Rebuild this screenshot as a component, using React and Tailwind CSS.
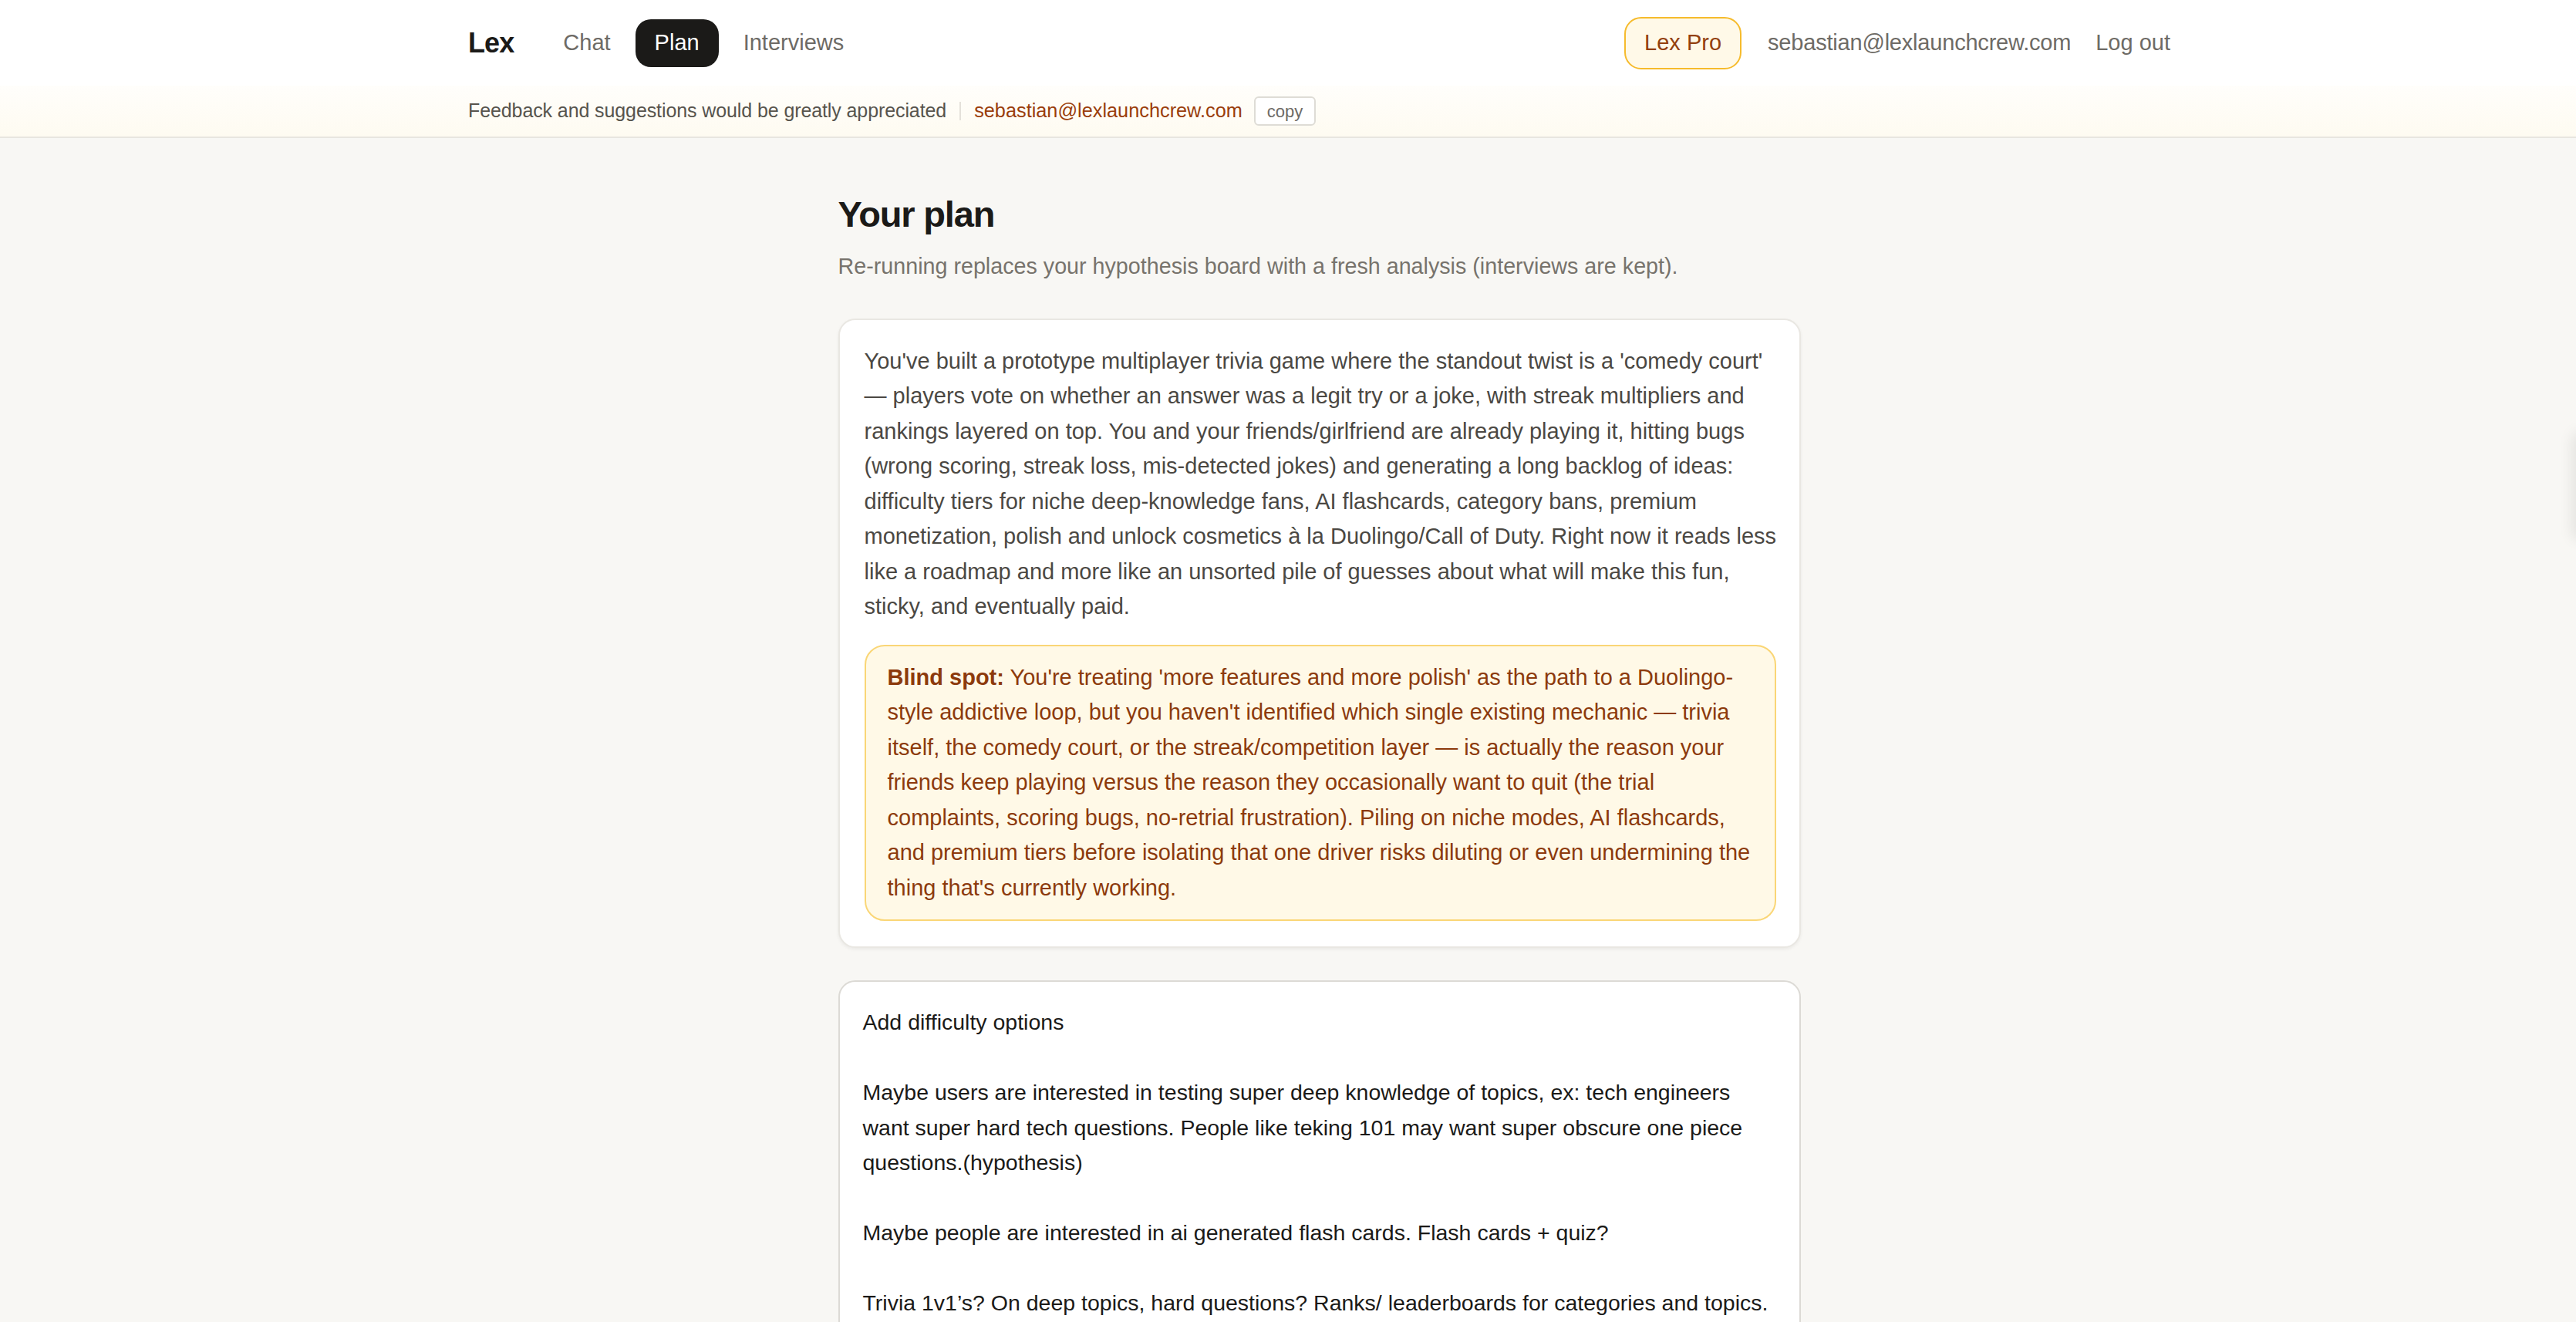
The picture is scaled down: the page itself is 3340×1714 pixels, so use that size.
import React from 'react';

const summary =
  "You've built a prototype multiplayer trivia game where the standout twist is a 'comedy court' — players vote on whether an answer was a legit try or a joke, with streak multipliers and rankings layered on top. You and your friends/girlfriend are already playing it, hitting bugs (wrong scoring, streak loss, mis-detected jokes) and generating a long backlog of ideas: difficulty tiers for niche deep-knowledge fans, AI flashcards, category bans, premium monetization, polish and unlock cosmetics à la Duolingo/Call of Duty. Right now it reads less like a roadmap and more like an unsorted pile of guesses about what will make this fun, sticky, and eventually paid.";

const blindSpot =
  "You're treating 'more features and more polish' as the path to a Duolingo-style addictive loop, but you haven't identified which single existing mechanic — trivia itself, the comedy court, or the streak/competition layer — is actually the reason your friends keep playing versus the reason they occasionally want to quit (the trial complaints, scoring bugs, no-retrial frustration). Piling on niche modes, AI flashcards, and premium tiers before isolating that one driver risks diluting or even undermining the thing that's currently working.";

const notes = [
  'Add difficulty options',
  'Maybe users are interested in testing super deep knowledge of topics, ex: tech engineers want super hard tech questions. People like teking 101 may want super obscure one piece questions.(hypothesis)',
  'Maybe people are interested in ai generated flash cards. Flash cards + quiz?',
  'Trivia 1v1’s? On deep topics, hard questions? Ranks/ leaderboards for categories and topics.',
  'Category bans before a match so players can skip topics they hate.',
];

const NavLink = ({ label, active }) => (
  <a
    href="#"
    className={
      active
        ? 'flex items-center h-[62px] px-[25px] rounded-[20px] bg-[#1b1a18] text-white'
        : 'flex items-center h-[62px] px-[25px] rounded-[20px] text-[#6e6b66]'
    }
  >
    {label}
  </a>
);

const App = () => {
  return (
    <div className="relative min-h-screen bg-[#f8f7f4] font-['Liberation_Sans',Arial,sans-serif] overflow-hidden">
      <header className="bg-white">
        <div className="pl-[81px]">
          <div className="mx-auto w-[2207px] h-[111px] flex items-center justify-between text-[29px]">
            <div className="flex items-center">
              <span className="text-[36px] font-bold tracking-tight text-[#1b1a18]">Lex</span>
              <nav className="ml-[39px] flex items-center gap-[7px]">
                <NavLink label="Chat" />
                <NavLink label="Plan" active />
                <NavLink label="Interviews" />
              </nav>
            </div>
            <div className="flex items-center text-[#6e6b66]">
              <button className="h-[68px] px-[24px] rounded-[22px] border-2 border-[#f6bb2c] bg-[#fff9e8] text-[#92400e]">
                Lex Pro
              </button>
              <span className="ml-[34px] tracking-[-0.2px]">sebastian@lexlaunchcrew.com</span>
              <a href="#" className="ml-[32px]">Log out</a>
            </div>
          </div>
        </div>
      </header>

      <div className="bg-gradient-to-b from-[#fffefb] to-[#fefbf1] border-b-2 border-[#e8e6e0]">
        <div className="pl-[81px]">
          <div className="mx-auto w-[2207px] h-[66px] flex items-center text-[25px]">
            <span className="text-[#57544d] tracking-[-0.1px]">Feedback and suggestions would be greatly appreciated</span>
            <span className="mx-[17px] w-[2px] h-[24px] bg-[#e4e1da]" />
            <span className="text-[25.3px] text-[#9a3d0b]">sebastian@lexlaunchcrew.com</span>
            <button className="ml-[15px] h-[38px] px-[15px] rounded-[6px] border-2 border-[#dedcd6] bg-white text-[22px] text-[#6e6b66]">
              copy
            </button>
          </div>
        </div>
      </div>

      <main className="pl-[81px]">
        <div className="mx-auto w-[1248px] pt-[72px] pb-[80px]">
          <h1 className="text-[47px] leading-[54px] font-bold tracking-tight text-[#1b1a18]">Your plan</h1>
          <p className="mt-[18px] text-[28.7px] leading-[45.5px] text-[#77736c]">
            Re-running replaces your hypothesis board with a fresh analysis (interviews are kept).
          </p>

          <section className="mt-[44px] bg-white border-2 border-[#e9e7e2] rounded-[22px] shadow-[0_2px_4px_rgba(0,0,0,0.06)] pl-[32px] pr-[28px] pt-[31px] pb-[33px]">
            <p className="text-[29px] leading-[45.5px] text-[#4b4843]">{summary}</p>
            <div className="mt-[26px] mr-[2px] bg-[#fff9e7] border-2 border-[#fad676] rounded-[26px] px-[28px] py-[18px] text-[29px] leading-[45.5px] text-[#8c3a0c]">
              <span className="font-bold">Blind spot:</span> {blindSpot}
            </div>
          </section>

          <section className="mt-[42px] bg-white border-2 border-[#dcdad5] rounded-[22px] pl-[30px] pr-[26px] pt-[30px] pb-[30px] text-[28.5px] leading-[45.5px] text-[#1b1a18]">
            {notes.map((n, i) => (
              <p key={i} className={i > 0 ? 'mt-[45.5px]' : ''}>
                {n}
              </p>
            ))}
          </section>
        </div>
      </main>

      <div className="absolute right-[-14px] top-[565px] w-[14px] h-[130px] rounded-full shadow-[0_0_18px_6px_rgba(0,0,0,0.08)]" />
    </div>
  );
};

export default App;
